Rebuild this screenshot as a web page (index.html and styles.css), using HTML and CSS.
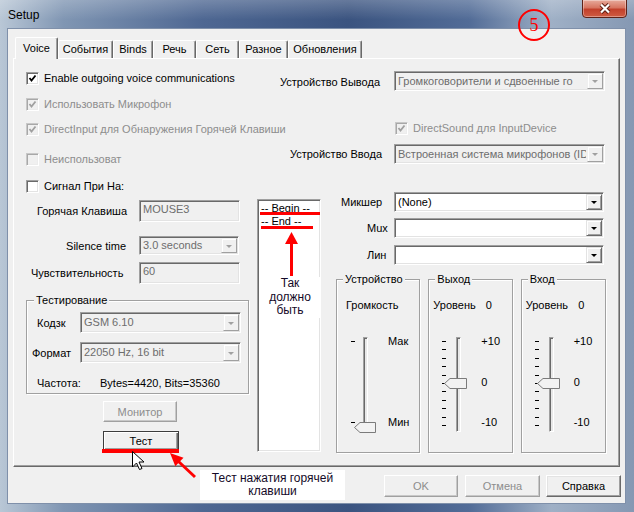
FILE: index.html
```html
<!DOCTYPE html>
<html lang="ru">
<head>
	<meta charset="UTF-8">
	<title>Setup</title>
	<link rel="stylesheet" href="styles.css">
</head>
<body>
<div class="window">
	<div class="titlebar">
		<span class="title">Setup</span>
		<span class="close">
			<svg width="14" height="11" viewBox="0 0 14 11"><path d="M3 1.5 L11 9.5 M11 1.5 L3 9.5" stroke="#5a1c12" stroke-width="4"/><path d="M3 1.5 L11 9.5 M11 1.5 L3 9.5" stroke="#fff" stroke-width="2.2"/></svg>
		</span>
	</div>
	<div class="client">
		<div class="tabs">
			<span class="tab active w-voice">Voice</span>
			<span class="tab w-events">События</span>
			<span class="tab w-binds">Binds</span>
			<span class="tab w-speech">Речь</span>
			<span class="tab w-net">Сеть</span>
			<span class="tab w-misc">Разное</span>
			<span class="tab w-upd">Обновления</span>
		</div>
		<div class="pane">
			<!-- верхняя часть: флажки и устройства -->
			<div class="top">
				<label class="cb-item r1 c1"><span class="cb on"><svg width="9" height="9" viewBox="0 0 9 9"><path d="M1.5 4 L3.5 6.5 L7.5 1.5" fill="none" stroke="#000" stroke-width="1.8"/></svg></span>Enable outgoing voice communications</label>
				<span class="lbl r1 c2 out-lbl">Устройство Вывода</span>
				<span class="select disabled r1 c3"><span class="val">Громкоговорители и сдвоенные го</span><span class="drop"></span></span>

				<label class="cb-item off r2 c1"><span class="cb on"><svg width="9" height="9" viewBox="0 0 9 9"><path d="M1.5 4 L3.5 6.5 L7.5 1.5" fill="none" stroke="#a0a0a0" stroke-width="1.8"/></svg></span>Использовать Микрофон</label>

				<label class="cb-item off r3 c1 shift1"><span class="cb on"><svg width="9" height="9" viewBox="0 0 9 9"><path d="M1.5 4 L3.5 6.5 L7.5 1.5" fill="none" stroke="#a0a0a0" stroke-width="1.8"/></svg></span>DirectInput для Обнаружения Горячей Клавиши</label>
				<label class="cb-item off r3 c3 ds"><span class="cb on"><svg width="9" height="9" viewBox="0 0 9 9"><path d="M1.5 4 L3.5 6.5 L7.5 1.5" fill="none" stroke="#a0a0a0" stroke-width="1.8"/></svg></span>DirectSound для InputDevice</label>

				<label class="cb-item off r4 c1 shift8"><span class="cb"></span>Неиспользоват</label>
				<span class="lbl r4 c2 in-lbl">Устройство Ввода</span>
				<span class="select disabled r4 c3"><span class="val">Встроенная система микрофонов (ID</span><span class="drop"></span></span>

				<label class="cb-item r5 c1 shift13"><span class="cb"></span>Сигнал При На:</label>
			</div>

			<div class="lower">
				<div class="col-left">
					<div class="field f-hotkey">
						<span class="f-lbl pad11">Горячая Клавиша</span>
						<span class="input disabled">MOUSE3</span>
					</div>
					<div class="field f-silence">
						<span class="f-lbl right">Silence time</span>
						<span class="select disabled sel-sm"><span class="val">3.0 seconds</span><span class="drop"></span></span>
					</div>
					<div class="field f-sens">
						<span class="f-lbl pad5">Чувствительность</span>
						<span class="input disabled">60</span>
					</div>
					<fieldset class="group test-group">
						<legend>Тестирование</legend>
						<div class="t-row t-codec">
							<span class="t-lbl pad10">Кодзк</span>
							<span class="select disabled sel-wide"><span class="val">GSM 6.10</span><span class="drop"></span></span>
						</div>
						<div class="t-row t-format">
							<span class="t-lbl pad5">Формат</span>
							<span class="select disabled sel-wide"><span class="val">22050 Hz, 16 bit</span><span class="drop"></span></span>
						</div>
						<div class="t-row t-rate">
							<span class="t-lbl rate-lbl pad10">Частота:</span>
							<span>Bytes=4420, Bits=35360</span>
						</div>
					</fieldset>
					<button class="btn disabled b-monitor">Монитор</button>
					<button class="btn default b-test">Тест</button>
				</div>

				<div class="listbox">
					<div class="item">-- Begin --</div>
					<div class="item">-- End --</div>
				</div>

				<div class="col-right">
					<div class="mix-row m-first">
						<span class="m-lbl pad6">Микшер</span>
						<span class="select mix-sel"><span class="val">(None)</span><span class="drop"></span></span>
					</div>
					<div class="mix-row">
						<span class="m-lbl pad32">Мux</span>
						<span class="select mix-sel"><span class="val"></span><span class="drop"></span></span>
					</div>
					<div class="mix-row">
						<span class="m-lbl pad32">Лин</span>
						<span class="select mix-sel"><span class="val"></span><span class="drop"></span></span>
					</div>

					<div class="groups">
						<fieldset class="group vol">
							<legend>Устройство</legend>
							<div class="cap pad9">Громкость</div>
							<div class="slider">
								<div class="ticks two"><i></i><i></i></div>
								<div class="track"><svg class="thumb at-min" width="22" height="11" viewBox="0 0 22 11"><polygon points="0.5,5.5 6,0.5 21.5,0.5 21.5,10.5 6,10.5" fill="#f2f2f2" stroke="#7b7b7b"/></svg></div>
								<div class="scale"><span>Мак</span><span>Мин</span></div>
							</div>
						</fieldset>
						<fieldset class="group lvl">
							<legend>Выход</legend>
							<div class="cap pad4">Уровень <span class="num">0</span></div>
							<div class="slider">
								<div class="ticks"><i></i><i></i><i></i><i></i><i></i><i></i><i></i><i></i><i></i><i></i><i></i></div>
								<div class="track"><svg class="thumb at-mid" width="23" height="11" viewBox="0 0 23 11"><polygon points="0.5,5.5 6,0.5 22.5,0.5 22.5,10.5 6,10.5" fill="#f2f2f2" stroke="#7b7b7b"/></svg></div>
								<div class="scale"><span>+10</span><span>0</span><span>-10</span></div>
							</div>
						</fieldset>
						<fieldset class="group lvl">
							<legend>Вход</legend>
							<div class="cap pad4">Уровень <span class="num">0</span></div>
							<div class="slider">
								<div class="ticks"><i></i><i></i><i></i><i></i><i></i><i></i><i></i><i></i><i></i><i></i><i></i></div>
								<div class="track"><svg class="thumb at-mid" width="23" height="11" viewBox="0 0 23 11"><polygon points="0.5,5.5 6,0.5 22.5,0.5 22.5,10.5 6,10.5" fill="#f2f2f2" stroke="#7b7b7b"/></svg></div>
								<div class="scale"><span>+10</span><span>0</span><span>-10</span></div>
							</div>
						</fieldset>
					</div>
				</div>
			</div>
		</div>
		<div class="actions">
			<button class="btn disabled b-ok">OK</button>
			<button class="btn disabled b-cancel">Отмена</button>
			<button class="btn b-help">Справка</button>
		</div>
	</div>

	<!-- пометки поверх скриншота -->
	<svg class="marks" width="634" height="512" viewBox="0 0 634 512">
		<circle cx="534" cy="25" r="15" fill="none" stroke="#ff0000" stroke-width="2"/>
		<text x="534" y="31" text-anchor="middle" font-family="Liberation Serif, serif" font-size="18" fill="#ff0000">5</text>
		<rect x="260" y="212" width="60" height="3" fill="#ff0000"/>
		<rect x="261" y="226" width="52" height="3" fill="#ff0000"/>
		<rect x="290" y="243" width="3" height="33" fill="#ff0000"/>
		<polygon points="285,244 298,244 291.5,232" fill="#ff0000"/>
		<rect x="102" y="449" width="77" height="4" fill="#ff0000"/>
		<line x1="195" y1="477" x2="178" y2="461" stroke="#ff0000" stroke-width="3"/>
		<polygon points="170,453 183.5,457.7 175.3,466.3" fill="#ff0000"/>
		<polygon points="132.5,451.5 132.5,467 136.5,463 139.5,469.5 142,468.5 139,462 144,462" fill="#fff" stroke="#000" stroke-width="1"/>
	</svg>
	<div class="note note-list">Так<br>должно<br>быть</div>
	<div class="note note-test">Тест нажатия горячей<br>клавиши</div>
</div>
</body>
</html>
```

FILE: styles.css
```css
*{box-sizing: border-box;}
body{margin: 0; font-family: "Liberation Sans", Arial, sans-serif; font-size: 11px; color: #000;}

/* окно */
.window{
	position: relative; width: 634px; height: 512px; overflow: hidden;
	background: linear-gradient(90deg, #b9c7d6 0%, #8096b3 10%, #4e6792 32%, #3b5480 55%, #526c97 74%, #9fb0c6 87%, #8598b3 100%);
}
.titlebar{
	height: 28px; display: flex; justify-content: space-between; align-items: flex-start;
	background: linear-gradient(180deg, rgba(255,255,255,.22), rgba(255,255,255,0) 70%);
}
.title{font-size: 12px; line-height: 14px; padding: 8px 0 0 8px;}
.close{
	width: 45px; height: 19px; margin: -1px 7px 0 0;
	display: flex; align-items: center; justify-content: center;
	border: 1px solid #5e2218; border-radius: 0 0 4px 4px;
	background: linear-gradient(180deg, #e7aa9b 0%, #d77561 45%, #c2402b 55%, #cf5c42 100%);
	box-shadow: inset 0 0 0 1px rgba(255,255,255,.35);
}
.client{
	margin-left: 7px; width: 619px; height: 476px;
	background: #f0f0f0; border: 1px solid #7f90aa;
	padding: 8px 0 0 5px;
}

/* вкладки */
.tabs{display: flex; align-items: flex-end; height: 21px; margin-left: 2px;}
.tab{
	height: 18px; line-height: 16px; text-align: center; white-space: nowrap;
	border: 1px solid; border-bottom: none; border-color: #fff #696969 #fff #fff;
	border-radius: 2px 2px 0 0; box-shadow: inset -1px 0 #a0a0a0;
	background: #f0f0f0;
}
.tab.active{height: 22px; line-height: 18px; padding-top: 1px; margin-bottom: -1px; position: relative; z-index: 1;}
.w-voice{width: 43px;}
.w-events{width: 55px;}
.w-binds{width: 40px;}
.w-speech{width: 43px;}
.w-net{width: 43px;}
.w-misc{width: 49px;}
.w-upd{width: 74px;}
.pane{
	width: 607px; height: 409px;
	border: 1px solid; border-color: #fff #696969 #696969 #fff;
	box-shadow: inset -1px -1px #a0a0a0;
}

/* верхняя сетка */
.top{
	display: grid; grid-template-columns: minmax(0, 1fr) auto 211px;
	grid-template-rows: 26px 24px 23px 22px 26px; column-gap: 13px;
	padding: 12px 14px 0 12px; align-items: start;
}
.r1{grid-row: 1;} .r2{grid-row: 2;} .r3{grid-row: 3;} .r4{grid-row: 4;} .r5{grid-row: 5;}
.c1{grid-column: 1;} .c2{grid-column: 2;} .c3{grid-column: 3;}
.lbl{line-height: 14px; white-space: nowrap; justify-self: end;}
.out-lbl{margin-top: 4px; margin-right: 1px;}
.in-lbl{margin-top: 3px; margin-right: -1px;}
.shift1{margin-top: 1px;}
.shift8{margin-top: 8px;}
.shift13{margin-top: 13px;}
.ds{margin-left: 1px;}

.cb-item{display: flex; align-items: center; gap: 5px; line-height: 14px; height: 14px; white-space: nowrap;}
.cb-item.off{color: #8d8d8d;}
.cb{
	width: 13px; height: 13px; flex: none; background: #fff;
	display: flex; align-items: center; justify-content: center;
	border: 1px solid; border-color: #a0a0a0 #fff #fff #a0a0a0;
	box-shadow: inset 1px 1px #696969, inset -1px -1px #e3e3e3;
}
.cb-item.off .cb{background: #f0f0f0; border-color: #c8c8c8 #fff #fff #c8c8c8; box-shadow: inset 1px 1px #a8a8a8, inset -1px -1px #ececec;}

/* поля */
.select, .input{
	display: flex; height: 20px; background: #fff;
	border: 1px solid; border-color: #a0a0a0 #fff #fff #a0a0a0;
	box-shadow: inset 1px 1px #696969, inset -1px -1px #e3e3e3;
}
.select .val{flex: 1; min-width: 0; padding: 0 0 0 3px; line-height: 18px; white-space: nowrap; overflow: hidden;}
.select .drop{
	width: 16px; flex: none; margin: 1px; background: #f0f0f0;
	border: 1px solid; border-color: #e3e3e3 #696969 #696969 #e3e3e3;
	box-shadow: inset 1px 1px #fff, inset -1px -1px #a0a0a0;
	display: flex; align-items: center; justify-content: center;
}
.select .drop::after{content: ""; border-left: 3px solid transparent; border-right: 3px solid transparent; border-top: 3px solid #000; margin-top: 1px;}
.select.disabled, .input.disabled{background: #f0f0f0; color: #6d6d6d;}
.select.disabled .drop{border-color: #f0f0f0 #a0a0a0 #a0a0a0 #f0f0f0; box-shadow: inset 1px 1px #fff;}
.select.disabled .drop::after{border-top-color: #a0a0a0;}
.input{height: 22px; padding: 1px 0 0 3px; line-height: 14px;}

/* нижняя часть */
.lower{display: flex; align-items: flex-start; padding-left: 12px;}
.col-left{width: 224px; display: flex; flex-direction: column; align-items: flex-start;}
.field{display: flex; align-items: center; width: 224px;}
.f-lbl{width: 113px; flex: none; line-height: 14px; white-space: nowrap;}
.f-lbl.right{text-align: right; padding-right: 13px;}
.pad4{padding-left: 4px;} .pad5{padding-left: 5px;} .pad6{padding-left: 6px;} .pad9{padding-left: 9px;}
.pad10{padding-left: 10px;} .pad11{padding-left: 11px;} .pad32{padding-left: 32px;}
.f-hotkey{margin-top: 8px;}
.f-hotkey .input, .f-sens .input{width: 101px;}
.f-silence{margin-top: 14px;}
.sel-sm{width: 100px; height: 19px;}
.sel-sm .val{line-height: 17px;}
.f-sens{margin-top: 7px;}

.group{
	margin: 0; padding: 0; min-width: 0;
	border: 1px solid #a0a0a0; box-shadow: inset 1px 1px #fff, 1px 1px #fff;
}
.group legend{margin-left: 7px; padding: 0 2px; line-height: 14px; background: #f0f0f0;}
.test-group{width: 223px; height: 101px; margin-top: 9px;}
.t-row{display: flex; align-items: center;}
.t-lbl{width: 53px; flex: none; line-height: 14px;}
.sel-wide{width: 161px; height: 21px;}
.sel-wide .val{line-height: 19px;}
.t-codec{margin-top: 5px;}
.t-format{margin-top: 9px;}
.t-rate{margin-top: 13px; line-height: 14px;}
.t-lbl.rate-lbl{width: 73px;}

.btn{
	font: inherit; color: #000; height: 21px; padding: 0;
	background: #f0f0f0;
	border: 1px solid; border-color: #fff #696969 #696969 #fff;
	box-shadow: inset -1px -1px #a0a0a0, inset 1px 1px #e3e3e3;
}
.btn.disabled{color: #8d8d8d; border-color: #fff #a0a0a0 #a0a0a0 #fff; box-shadow: inset -1px -1px #c8c8c8;}
.btn.default{border: 1px solid #3c3c3c; box-shadow: inset 1px 1px #fff, inset -1px -1px #696969, inset -2px -2px #a0a0a0;}
.b-monitor{width: 74px; margin: 7px 0 0 77px;}
.b-test{width: 76px; height: 20px; margin: 9px 0 0 77px;}

.listbox{
	width: 64px; height: 253px; margin: 7px 0 0 7px; background: #fff;
	border: 1px solid; border-color: #a0a0a0 #fff #fff #a0a0a0;
	box-shadow: inset 1px 1px #696969, inset -1px -1px #e3e3e3;
	padding: 2px 0 0 3px;
}
.listbox .item{line-height: 13px; white-space: nowrap;}

.col-right{width: 271px; margin-left: 14px;}
.mix-row{display: flex; align-items: center; margin-top: 6px;}
.mix-row + .mix-row + .mix-row{margin-top: 7px;}
.mix-row.m-first{margin-top: 0;}
.m-lbl{width: 59px; flex: none; line-height: 14px;}
.mix-sel{width: 210px;}

.groups{display: flex; gap: 8px; margin: 7px 0 0 1px;}
.groups .group{height: 181px; width: 85px;}
.groups .group:last-child{width: 86px;}
.groups legend{margin-left: 6px;}
.cap{margin-top: 12px; line-height: 14px; white-space: nowrap;}
.cap .num{margin-left: 7px;}

/* ползунки */
.slider{display: flex; align-items: flex-start; height: 98px; margin-top: 23px;}
.ticks{
	width: 4px; height: 85px; margin: 6px 0 0 13px;
	display: flex; flex-direction: column; justify-content: space-between;
}
.ticks.two{height: 82px; margin-left: 14px;}
.ticks i{display: block; height: 1px; background: #000;}
.track{
	position: relative; width: 5px; height: 95px; margin: 2px 0 0 10px;
	border: 1px solid; border-color: #a0a0a0 #fff #fff #a0a0a0;
	box-shadow: inset 1px 1px #696969; background: #e8e8e8;
}
.vol .track{margin-left: 8px;}
.thumb{position: absolute; left: -13px; display: block;}
.thumb.at-min{top: 84px; left: -10px;}
.thumb.at-mid{top: 40px;}
.scale{
	height: 95px; margin: -1px 0 0 20px; line-height: 14px;
	display: flex; flex-direction: column; justify-content: space-between; white-space: nowrap;
}
.lvl .scale{height: 95px;}
.lvl .scale span:nth-child(2){margin-top: 1px;}

/* кнопки диалога */
.actions{display: flex; justify-content: flex-end; gap: 7px; width: 608px; margin-top: 8px;}
.actions .btn{height: 22px;}
.b-ok{width: 74px;}
.b-cancel{width: 75px;}
.b-help{width: 75px; margin-left: -1px;}

/* пометки */
.marks{position: absolute; left: 0; top: 0; pointer-events: none;}
.note{position: absolute; background: #fff; color: #140a28; font-size: 12px; text-align: center;}
.note-list{left: 260px; top: 277px; width: 60px; line-height: 13.5px;}
.note-test{left: 200px; top: 470px; width: 145px; height: 30px; line-height: 13px; padding-top: 2px;}
```
